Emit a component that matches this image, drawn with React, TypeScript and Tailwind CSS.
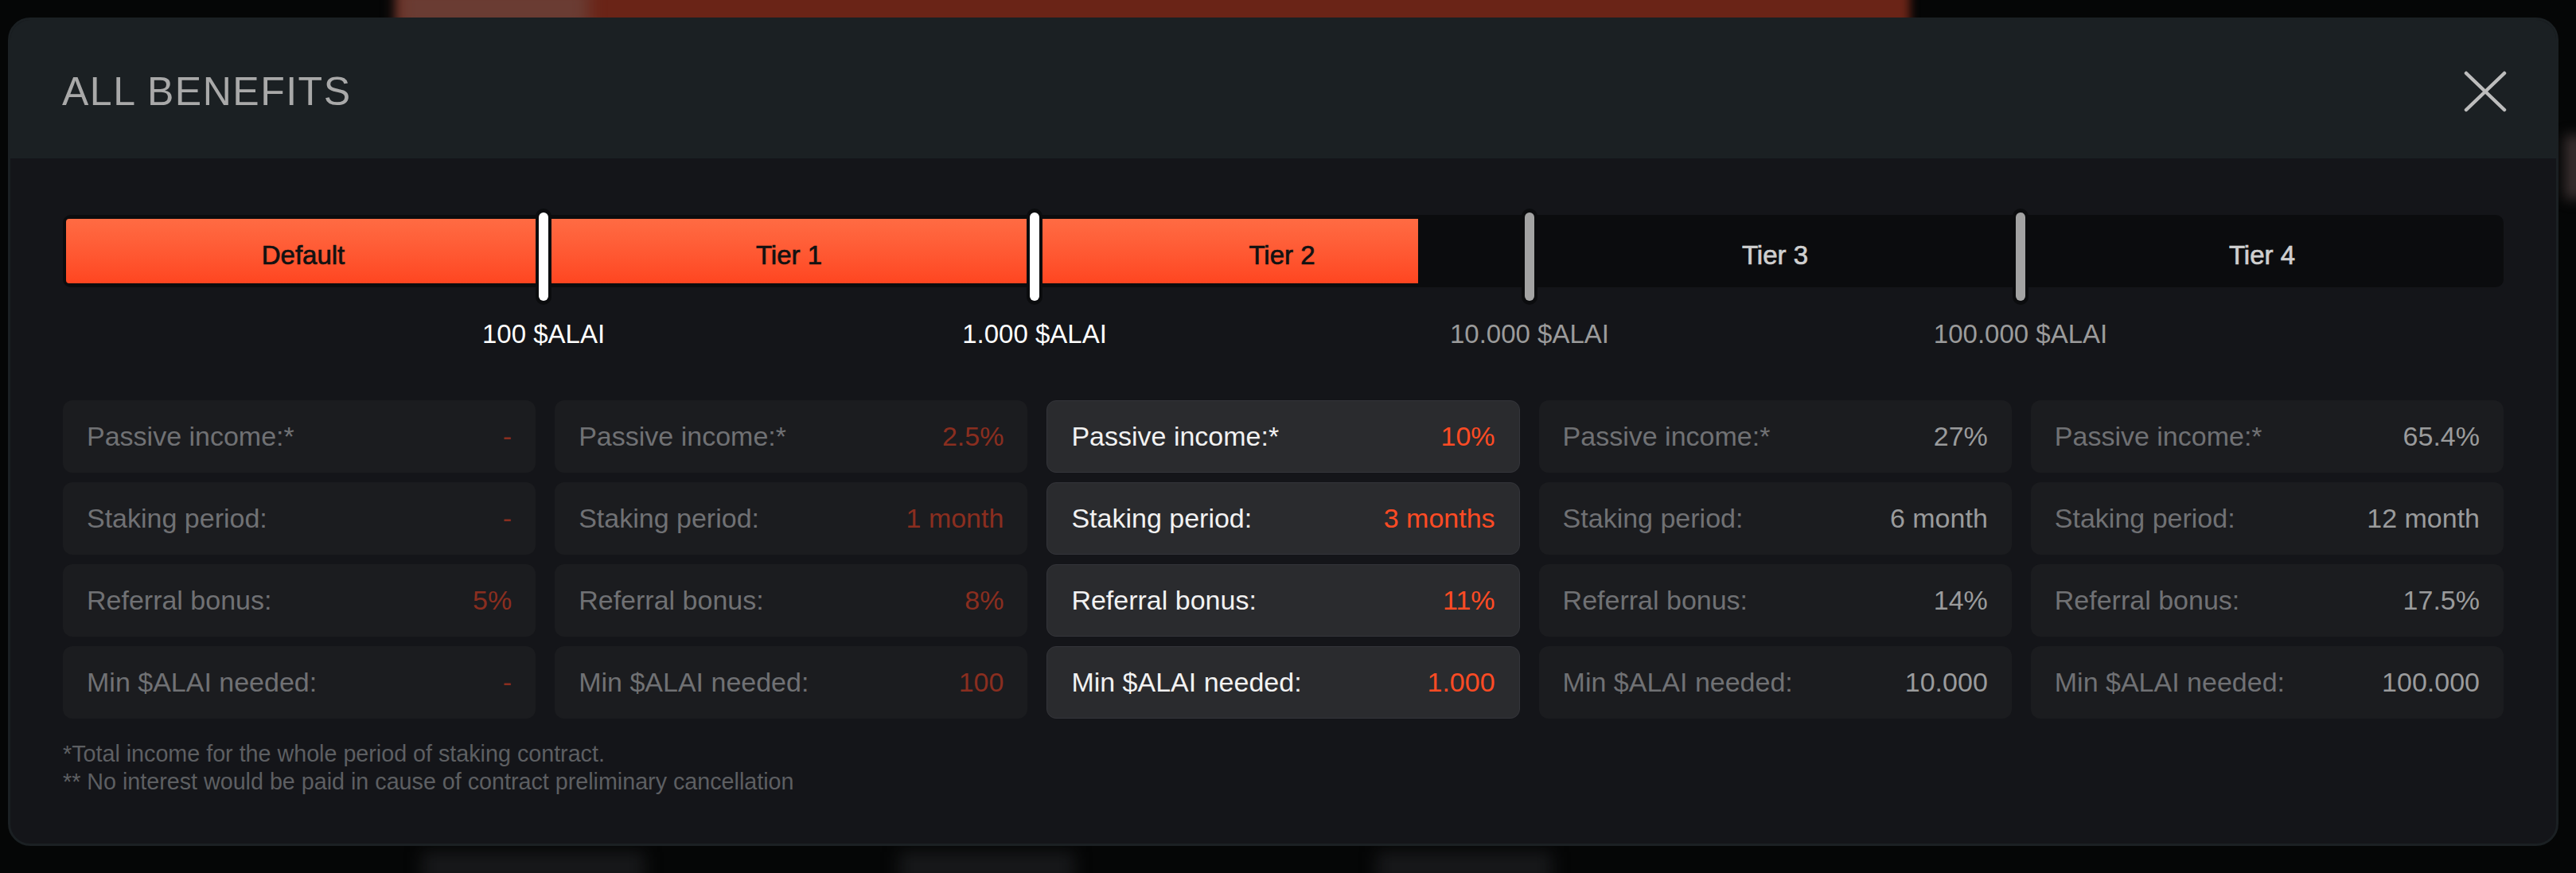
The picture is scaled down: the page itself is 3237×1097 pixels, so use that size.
import React from 'react';

type Tier = {
  name: string;
  threshold: string;
  passive: string;
  period: string;
  referral: string;
  minNeeded: string;
};

const TIERS: Tier[] = [
  { name: 'Default', threshold: '100 $ALAI', passive: '-', period: '-', referral: '5%', minNeeded: '-' },
  { name: 'Tier 1', threshold: '1.000 $ALAI', passive: '2.5%', period: '1 month', referral: '8%', minNeeded: '100' },
  { name: 'Tier 2', threshold: '10.000 $ALAI', passive: '10%', period: '3 months', referral: '11%', minNeeded: '1.000' },
  { name: 'Tier 3', threshold: '100.000 $ALAI', passive: '27%', period: '6 month', referral: '14%', minNeeded: '10.000' },
  { name: 'Tier 4', threshold: '', passive: '65.4%', period: '12 month', referral: '17.5%', minNeeded: '100.000' },
];

// current tier index
const CURRENT = 2;

// segment widths on the track (px)
const SEG_W = ['w-[604px]', 'w-[617px]', 'w-[622px]', 'w-[617px]', 'w-[607px]'];

const CloseIcon = () => (
  <svg width="54" height="52" viewBox="0 0 54 52" fill="none">
    <path d="M3 3L51 49M51 3L3 49" stroke="#bdbdbd" strokeWidth="4.5" strokeLinecap="round" />
  </svg>
);

const BenefitCard = ({ label, value, tier }: { label: string; value: string; tier: number }) => {
  const active = tier === CURRENT;
  const valueColor = active ? 'text-[#ff4b24]' : tier < CURRENT ? 'text-[#8a2e1f]' : 'text-[#9a9b9c]';
  return (
    <div
      className={`flex h-[91px] items-center justify-between rounded-[12px] px-[30px] text-[34px] ${
        active ? 'border border-[#34353a] bg-[#2a2b2e]' : 'bg-[#1b1c1f]'
      }`}
    >
      <span className={active ? 'text-[#f2f2f2]' : 'text-[#707174]'}>{label}</span>
      <span className={valueColor}>{value}</span>
    </div>
  );
};

export default function App() {
  return (
    <div
      className="relative h-[1097px] w-full overflow-hidden bg-[#050606]"
      style={{ fontFamily: '"Liberation Sans", Arial, Helvetica, sans-serif' }}
    >
      {/* page behind the modal */}
      <div className="pointer-events-none absolute inset-0">
        <div className="absolute left-[500px] top-[-20px] h-[60px] w-[1900px] bg-[#6a2417] blur-[6px]" />
        <div className="absolute left-[500px] top-[-20px] h-[60px] w-[240px] bg-[#6a3c33] blur-[10px]" />
        <div className="absolute left-[530px] top-[1070px] h-[40px] w-[280px] bg-[#17181a] blur-[10px]" />
        <div className="absolute left-[1130px] top-[1070px] h-[40px] w-[220px] bg-[#17181a] blur-[10px]" />
        <div className="absolute left-[1730px] top-[1070px] h-[40px] w-[220px] bg-[#17181a] blur-[10px]" />
        <div className="absolute right-[-10px] top-[170px] h-[80px] w-[24px] bg-[#3a3030] blur-[8px]" />
      </div>

      {/* modal */}
      <div className="relative ml-[10px] mt-[22px] w-[3205px] overflow-hidden rounded-[28px] border-[3px] border-[#1b2023] bg-[#141519]">
        <div className="flex h-[174px] items-center justify-between bg-[#1b2023] pl-[65px] pr-[62px] pt-[6px]">
          <h2 className="text-[50px] font-normal uppercase tracking-[1.5px] text-[#a9a9a9]">All benefits</h2>
          <button className="flex items-center justify-center">
            <CloseIcon />
          </button>
        </div>

        <div className="px-[66px] pb-[60px] pt-[71px]">
          {/* tier track */}
          <div className="relative flex h-[91px] rounded-[10px] bg-[#0b0c0e]">
            <div className="absolute bottom-[5px] left-[4px] top-[5px] w-[1699px] rounded-l-[4px] bg-linear-to-b from-[#ff6b43] to-[#ff4520]" />
            {TIERS.map((t, i) => (
              <div key={t.name} className={`relative z-10 flex items-center justify-center ${SEG_W[i]}`}>
                <span
                  className={`pt-[10px] text-[33px] [-webkit-text-stroke:0.7px_currentColor] ${
                    i <= CURRENT ? 'text-[#111111]' : 'text-[#cfcfcf]'
                  }`}
                >
                  {t.name}
                </span>
                {i < TIERS.length - 1 && (
                  <div className="absolute right-0 top-[-8px] h-[121px] w-[20px] translate-x-1/2 rounded-full bg-[#0b0c0e] px-[4px] py-[5px]">
                    <div className={`h-full w-full rounded-full ${i < CURRENT ? 'bg-white' : 'bg-[#a3a3a3]'}`} />
                  </div>
                )}
              </div>
            ))}
          </div>

          {/* thresholds */}
          <div className="mt-[40px] flex h-[37px]">
            {TIERS.map((t, i) => (
              <div key={t.name} className={`flex justify-end ${SEG_W[i]}`}>
                {t.threshold && (
                  <span
                    className={`translate-x-1/2 whitespace-nowrap text-[33px] leading-[37px] ${
                      i < CURRENT ? 'text-white' : 'text-[#9b9b9b]'
                    }`}
                  >
                    {t.threshold}
                  </span>
                )}
              </div>
            ))}
          </div>

          {/* benefit cards */}
          <div className="mt-[65px] grid grid-cols-5 gap-x-[24px]">
            {TIERS.map((t, i) => (
              <div key={t.name} className="flex flex-col gap-[12px]">
                <BenefitCard tier={i} label="Passive income:*" value={t.passive} />
                <BenefitCard tier={i} label="Staking period:" value={t.period} />
                <BenefitCard tier={i} label="Referral bonus:" value={t.referral} />
                <BenefitCard tier={i} label="Min $ALAI needed:" value={t.minNeeded} />
              </div>
            ))}
          </div>

          <div className="mt-[27px] text-[28.7px] leading-[35px] text-[#5d5f62]">
            <p>*Total income for the whole period of staking contract.</p>
            <p>** No interest would be paid in cause of contract preliminary cancellation</p>
          </div>
        </div>
      </div>
    </div>
  );
}
